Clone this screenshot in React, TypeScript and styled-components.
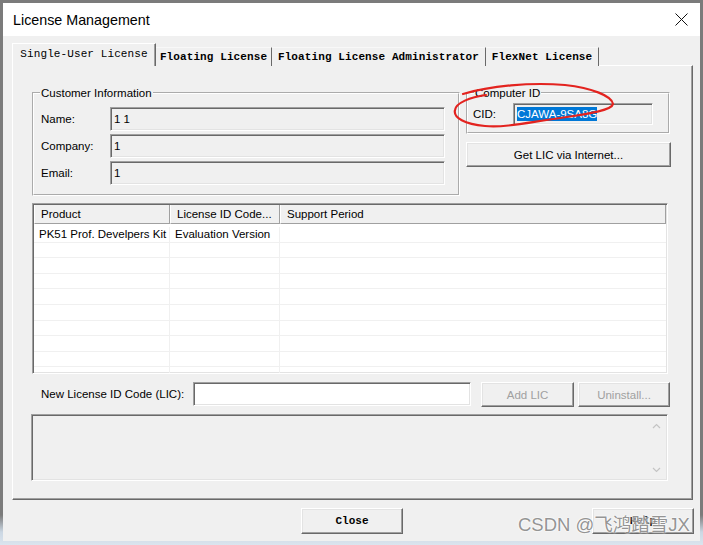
import React from "react";
import styled, { createGlobalStyle } from "styled-components";

const Global = createGlobalStyle`
  html, body { margin: 0; padding: 0; background: #7b7b7b; }
  body { font-family: "Liberation Sans", Arial, sans-serif; }
  * { box-sizing: border-box; }
`;

const Page = styled.div`
  position: relative;
  width: 703px;
  height: 545px;
  padding: 3px 3px 0 3px;
  background: linear-gradient(#7b7b7b 0, #7b7b7b 515px, #cbd7e3 532px, #dbe4ee 545px);
  overflow: hidden;
`;

const Window = styled.div`
  width: 697px;
  height: 538px;
  display: flex;
  flex-direction: column;
  background: #f0f0f0;
`;

const TitleBar = styled.div`
  height: 33px;
  flex: none;
  background: #fff;
  display: flex;
  align-items: center;
  justify-content: space-between;
  padding: 0 12px 0 10px;
  font-size: 14.3px;
  color: #000;
`;

const Body = styled.div`
  flex: 1;
  display: flex;
  flex-direction: column;
  padding: 7px 0 0 9px;
`;

const TabStrip = styled.div`
  display: flex;
  align-items: flex-end;
  height: 23px;
  position: relative;
  z-index: 1;
`;

const Tab = styled.div<{ $active?: boolean; $w: number }>`
  width: ${(p) => p.$w}px;
  height: ${(p) => (p.$active ? 23 : 19)}px;
  display: flex;
  align-items: center;
  justify-content: center;
  font-family: "Liberation Mono", "DejaVu Sans Mono", monospace;
  font-size: 11px;
  letter-spacing: 0.1px;
  font-weight: ${(p) => (p.$active ? 400 : 700)};
  color: #000;
  background: #f0f0f0;
  border-right: 1px solid #696969;
  border-top: 1px solid ${(p) => (p.$active ? "#fff" : "#f8f8f8")};
  border-left: ${(p) => (p.$active ? "1px solid #fff" : "none")};
  box-shadow: ${(p) => (p.$active ? "inset -1px 0 0 #a0a0a0" : "none")};
  padding-bottom: ${(p) => (p.$active ? 2 : 0)}px;
`;

const Panel = styled.div`
  width: 681px;
  height: 435px;
  margin-top: -1px;
  border-style: solid;
  border-width: 1px;
  border-color: #fff #696969 #696969 #fff;
  box-shadow: inset -1px -1px 0 #a0a0a0;
  padding: 20px 0 0 19px;
  display: flex;
  flex-direction: column;
`;

const TopSection = styled.div`
  display: flex;
  gap: 6px;
  align-items: flex-start;
`;

const GroupBox = styled.fieldset<{ $w: number; $h: number }>`
  width: ${(p) => p.$w}px;
  height: ${(p) => p.$h}px;
  margin: 0;
  padding: 0;
  min-width: 0;
  border: 2px groove #fff;
`;

const Legend = styled.legend`
  font-size: 11.5px;
  line-height: 14px;
  padding: 0 1px;
  margin-left: 6px;
  color: #000;
`;

const CustomerGrid = styled.div`
  display: grid;
  grid-template-columns: 69px 335px;
  grid-auto-rows: 24px;
  row-gap: 3px;
  align-items: center;
  padding: 7px 0 0 7px;
`;

const Label = styled.span`
  font-size: 11.5px;
  color: #000;
  white-space: nowrap;
`;

const Sunken = styled.div<{ $w?: number; $h: number; $bg?: string }>`
  width: ${(p) => (p.$w ? `${p.$w}px` : "auto")};
  height: ${(p) => p.$h}px;
  background: ${(p) => p.$bg ?? "#f0f0f0"};
  border-style: solid;
  border-width: 1px;
  border-color: #a0a0a0 #fff #fff #a0a0a0;
  box-shadow: inset 1px 1px 0 #696969, inset -1px -1px 0 #e3e3e3;
`;

const Field = styled(Sunken)`
  display: flex;
  align-items: center;
  padding: 0 3px 0 3px;
  font-size: 11.5px;
  color: #000;
`;

const RightColumn = styled.div`
  width: 205px;
  display: flex;
  flex-direction: column;
  gap: 8px;
`;

const CidRow = styled.div`
  display: flex;
  align-items: center;
  padding: 3px 0 0 5px;
`;

const CidLabel = styled(Label)`
  width: 40px;
`;

const Selected = styled.span`
  background: #0078d7;
  color: #fff;
  line-height: 14px;
`;

const Button = styled.div<{ $w: number; $h: number; $disabled?: boolean; $mono?: boolean }>`
  width: ${(p) => p.$w}px;
  height: ${(p) => p.$h}px;
  flex: none;
  display: flex;
  align-items: center;
  justify-content: center;
  background: #f0f0f0;
  border-style: solid;
  border-width: 1px;
  border-color: #fff #696969 #696969 #fff;
  box-shadow: inset -1px -1px 0 #a0a0a0, inset 1px 1px 0 #e3e3e3;
  color: ${(p) => (p.$disabled ? "#a0a0a0" : "#000")};
  font-family: ${(p) =>
    p.$mono ? '"Liberation Mono", "DejaVu Sans Mono", monospace' : '"Liberation Sans", Arial, sans-serif'};
  font-size: ${(p) => (p.$mono ? 11 : 11.5)}px;
  font-weight: ${(p) => (p.$mono ? 700 : 400)};
`;

const ListView = styled(Sunken)`
  margin-top: 7px;
  padding: 1px;
  overflow: hidden;
`;

const COLS = "136px 110px 1fr";

const HeaderRow = styled.div`
  display: grid;
  grid-template-columns: ${COLS};
  height: 19px;
`;

const HeaderCell = styled.div`
  display: flex;
  align-items: center;
  padding-left: 6px;
  font-size: 11.5px;
  color: #000;
  background: #f0f0f0;
  border-left: 1px solid #fff;
  border-right: 1px solid #a0a0a0;
  border-bottom: 1px solid #a0a0a0;
  white-space: nowrap;
  overflow: hidden;
`;

const Rows = styled.div`
  padding-top: 3px;
`;

const Row = styled.div`
  display: grid;
  grid-template-columns: ${COLS};
  height: 15.6px;
  border-bottom: 1px solid #f0f0f0;
`;

const Cell = styled.div`
  display: flex;
  align-items: center;
  padding-left: 5px;
  font-size: 11.5px;
  color: #000;
  white-space: nowrap;
  overflow: hidden;
  border-right: 1px solid #f0f0f0;
  &:last-child { border-right: none; }
`;

const LicRow = styled.div`
  margin-top: 8px;
  display: flex;
  align-items: flex-start;
  padding-left: 9px;
`;

const LicLabel = styled(Label)`
  width: 152px;
  height: 24px;
  display: flex;
  align-items: center;
`;

const Spacer = styled.div<{ $w: number }>`
  width: ${(p) => p.$w}px;
  flex: none;
`;

const MessageBox = styled(Sunken)`
  margin-top: 7px;
  margin-left: -1px;
  display: flex;
  justify-content: flex-end;
  padding: 8px 6px 7px 0;
`;

const ScrollArrows = styled.div`
  width: 10px;
  display: flex;
  flex-direction: column;
  justify-content: space-between;
  align-items: center;
`;

const BottomRow = styled.div`
  margin-top: 8px;
  display: flex;
  padding-left: 289px;
  gap: 189px;
`;

const Watermark = styled.div`
  position: absolute;
  left: 518px;
  top: 510px;
  font-family: "Liberation Sans", "Noto Sans CJK SC", sans-serif;
  font-size: 18.5px;
  color: rgba(120, 120, 120, 0.8);
  text-shadow: 0 0 2px #fff, 0 0 2px #fff;
  white-space: nowrap;
  pointer-events: none;
`;

const Annotation = styled.svg`
  position: absolute;
  left: 0;
  top: 0;
  pointer-events: none;
`;

const Chevron = ({ up }: { up?: boolean }) => (
  <svg width="9" height="6" viewBox="0 0 9 6">
    <path
      d={up ? "M1 5 L4.5 1.5 L8 5" : "M1 1 L4.5 4.5 L8 1"}
      fill="none"
      stroke="#c4c4c4"
      strokeWidth="1.2"
    />
  </svg>
);

const rows = Array.from({ length: 10 }, (_, i) => i);

export default function App() {
  return (
    <>
      <Global />
      <Page>
        <Window>
          <TitleBar>
            <span>License Management</span>
            <svg width="13" height="13" viewBox="0 0 13 13">
              <path d="M0.5 0.5 L12.5 12.5 M12.5 0.5 L0.5 12.5" stroke="#111" strokeWidth="1" />
            </svg>
          </TitleBar>
          <Body>
            <TabStrip>
              <Tab $active $w={144}>Single-User License</Tab>
              <Tab $w={116}>Floating License</Tab>
              <Tab $w={214}>Floating License Administrator</Tab>
              <Tab $w={113}>FlexNet License</Tab>
            </TabStrip>
            <Panel>
              <TopSection>
                <GroupBox $w={428} $h={110}>
                  <Legend>Customer Information</Legend>
                  <CustomerGrid>
                    <Label>Name:</Label>
                    <Field $h={24}>1 1</Field>
                    <Label>Company:</Label>
                    <Field $h={24}>1</Field>
                    <Label>Email:</Label>
                    <Field $h={24}>1</Field>
                  </CustomerGrid>
                </GroupBox>
                <RightColumn>
                  <GroupBox $w={204} $h={48}>
                    <Legend>Computer ID</Legend>
                    <CidRow>
                      <CidLabel>CID:</CidLabel>
                      <Field $w={140} $h={22}>
                        <Selected>CJAWA-9SA8G</Selected>
                      </Field>
                    </CidRow>
                  </GroupBox>
                  <Button $w={205} $h={25}>Get LIC via Internet...</Button>
                </RightColumn>
              </TopSection>
              <ListView $w={636} $h={171} $bg="#fff">
                <HeaderRow>
                  <HeaderCell>Product</HeaderCell>
                  <HeaderCell>License ID Code...</HeaderCell>
                  <HeaderCell>Support Period</HeaderCell>
                </HeaderRow>
                <Rows>
                  {rows.map((i) => (
                    <Row key={i}>
                      <Cell>{i === 0 ? "PK51 Prof. Develpers Kit" : ""}</Cell>
                      <Cell>{i === 0 ? "Evaluation Version" : ""}</Cell>
                      <Cell />
                    </Row>
                  ))}
                </Rows>
              </ListView>
              <LicRow>
                <LicLabel>New License ID Code (LIC):</LicLabel>
                <Sunken $w={278} $h={24} $bg="#fff" />
                <Spacer $w={10} />
                <Button $w={93} $h={25} $disabled>Add LIC</Button>
                <Spacer $w={4} />
                <Button $w={92} $h={25} $disabled>Uninstall...</Button>
              </LicRow>
              <MessageBox $w={637} $h={67}>
                <ScrollArrows>
                  <Chevron up />
                  <Chevron />
                </ScrollArrows>
              </MessageBox>
            </Panel>
            <BottomRow>
              <Button $w={102} $h={26} $mono>Close</Button>
              <Button $w={102} $h={26} $mono>Help</Button>
            </BottomRow>
          </Body>
        </Window>
        <Annotation width="703" height="545" viewBox="0 0 703 545">
          <path
            d="M463 94 C 490 86 530 82 565 85 C 592 88 612 96 613 104 C 612 110 590 114 560 118 C 530 122 505 128 485 126 C 465 124 453 118 455 110 C 456 103 470 97 486 95"
            fill="none"
            stroke="#e3231f"
            strokeWidth="2.2"
            strokeLinecap="round"
          />
        </Annotation>
        <Watermark>CSDN @飞鸿踏雪JX</Watermark>
      </Page>
    </>
  );
}
